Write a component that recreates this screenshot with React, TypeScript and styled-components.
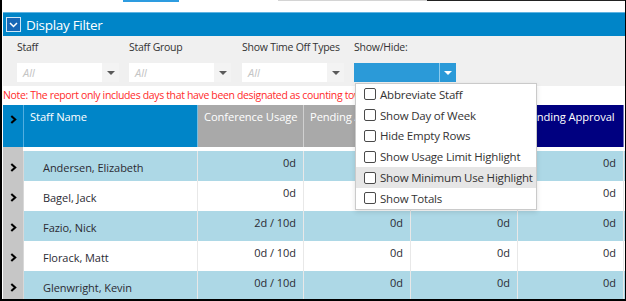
import styled, { createGlobalStyle } from 'styled-components';

const GlobalStyle = createGlobalStyle`
    body {
        margin: 0;
        background: #fff;
        font-family: "Open Sans", "Noto Sans", sans-serif;
    }
`

const Frame = styled.div`
    position: relative;
    width: 626px;
    height: 301px;
    box-sizing: border-box;
    border-left: 2px solid #000;
    border-right: 1px solid #000;
    border-bottom: 2px solid #000;
    padding-left: 1px;
    overflow: hidden;
    display: flex;
    flex-direction: column;
`

const TopStrip = styled.div`
    height: 12px;
    flex: none;
    display: flex;
    align-items: flex-start;
`

const TabMark = styled.div`
    margin-left: 120px;
    width: 56px;
    height: 2px;
    background: #2d9ce0;
`

const EdgeLine = styled.div<{ $dark?: boolean; $w?: number }>`
    margin-left: ${p => (p.$dark ? 0 : 99)}px;
    ${p => (p.$w ? `width: ${p.$w}px;` : 'flex: 1;')}
    height: 1px;
    background: ${p => (p.$dark ? '#222' : '#d4d4d4')};
`

const FilterHeader = styled.div`
    height: 24px;
    flex: none;
    box-sizing: border-box;
    background: #0085c8;
    border-top: 1px solid #5fb4e2;
    display: flex;
    align-items: center;
    gap: 5px;
    padding-left: 3px;
    color: #fff;
    font-size: 13.5px;
    letter-spacing: -0.3px;
`

const ToggleBox = styled.div`
    width: 15px;
    height: 15px;
    box-sizing: border-box;
    border: 1px solid #cfe6f6;
    background: #1767b6;
    display: flex;
    align-items: center;
    justify-content: center;
`

const FilterPanel = styled.div`
    height: 50px;
    flex: none;
    box-sizing: border-box;
    background: #f0f0f0;
    padding: 4px 0 0 14px;
    display: flex;
`

const FilterField = styled.div<{ $w: number }>`
    width: ${p => p.$w}px;
    display: flex;
    flex-direction: column;
    gap: 9px;
`

const FilterLabel = styled.div`
    font-size: 10.5px;
    letter-spacing: -0.25px;
    line-height: 14px;
    color: #333;
    white-space: nowrap;
`

const Combo = styled.div`
    display: flex;
    height: 19px;
    width: 102px;
`

const ComboInput = styled.div<{ $active?: boolean }>`
    width: 85px;
    box-sizing: border-box;
    padding-left: 6px;
    background: ${p => (p.$active ? '#2b9ad8' : '#fff')};
    color: #c4c4c4;
    font-style: italic;
    font-size: 11px;
    line-height: 19px;
`

const ComboArrow = styled.div<{ $active?: boolean }>`
    width: 17px;
    box-sizing: border-box;
    display: flex;
    align-items: center;
    justify-content: center;
    background: ${p => (p.$active ? '#2b9ad8' : '#f3f3f3')};
    border-left: 1px solid ${p => (p.$active ? '#8ccbee' : '#f3f3f3')};
    &::after {
        content: '';
        border-left: 4px solid transparent;
        border-right: 4px solid transparent;
        border-top: 4px solid ${p => (p.$active ? '#fff' : '#5a5a5a')};
    }
`

const Note = styled.div`
    height: 19px;
    flex: none;
    line-height: 19px;
    font-size: 10.5px;
    letter-spacing: -0.35px;
    color: #ff2b2b;
    white-space: nowrap;
    overflow: hidden;
`

const COLS = '21px 174px 106px 107px 107px 106px';

const HeaderRow = styled.div`
    display: grid;
    grid-template-columns: ${COLS};
    height: 42px;
    flex: none;
`

const toneColors = {
    blue: '#0085c8',
    grey: '#a9a9a9',
    navy: '#000080',
};

const HeadCell = styled.div<{ $tone: keyof typeof toneColors }>`
    background: ${p => toneColors[p.$tone]};
    color: #fff;
    font-size: 11.2px;
    letter-spacing: -0.1px;
    line-height: 16px;
    padding: 4px 6px 0;
    border-right: 1px solid rgba(255, 255, 255, 0.45);
    white-space: nowrap;
    overflow: hidden;
`

const GutterCell = styled.div<{ $head?: boolean }>`
    background: ${p => (p.$head ? '#0085c8' : '#c6c6c6')};
    border-right: 1px solid ${p => (p.$head ? '#52aee0' : '#d8d8d8')};
    display: flex;
    justify-content: center;
    align-items: ${p => (p.$head ? 'flex-start' : 'center')};
    padding-top: ${p => (p.$head ? 10 : 3)}px;
    box-sizing: border-box;
`

const Body = styled.div`
    padding-top: 4px;
    background: linear-gradient(90deg, #c6c6c6 20px, #fff 20px);
`

const DataRow = styled.div<{ $alt?: boolean }>`
    display: grid;
    grid-template-columns: ${COLS};
    height: 30px;
    background: ${p => (p.$alt ? '#add8e6' : '#fff')};
    color: #2b2b33;
    font-size: 11px;
    letter-spacing: -0.05px;
`

const NameCell = styled.div`
    display: flex;
    align-items: center;
    padding: 3px 0 0 19px;
    border-right: 1px solid #e8e8e8;
    white-space: nowrap;
`

const ValueCell = styled.div`
    text-align: right;
    padding: 4px 7px 0 0;
    line-height: 16px;
    border-right: 1px solid #e8e8e8;
    white-space: nowrap;
`

const Menu = styled.div`
    position: absolute;
    left: 353px;
    top: 83px;
    width: 182px;
    box-sizing: border-box;
    background: #fff;
    border: 1px solid #cacaca;
    box-shadow: 0 2px 5px rgba(0, 0, 0, 0.12);
`

const MenuItem = styled.div<{ $hover?: boolean }>`
    height: 20.8px;
    display: flex;
    align-items: center;
    gap: 4px;
    padding-left: 8px;
    background: ${p => (p.$hover ? '#e6e6e6' : 'transparent')};
    font-size: 11.5px;
    letter-spacing: -0.2px;
    color: #333;
    white-space: nowrap;
`

const CheckBox = styled.span`
    width: 12px;
    height: 12px;
    box-sizing: border-box;
    border: 1px solid #4a4a4a;
    border-radius: 2px;
    background: #fff;
    flex: none;
`

const Chevron = () => (
    <svg width="7" height="9" viewBox="0 0 7 9">
        <path d="M1.3 1 L5.2 4.5 L1.3 8" fill="none" stroke="#000" strokeWidth="2.1" />
    </svg>
)

const filters = [
    { label: 'Staff', w: 112 },
    { label: 'Staff Group', w: 113 },
    { label: 'Show Time Off Types', w: 112 },
];

const rows = [
    { name: 'Andersen, Elizabeth', values: ['0d', '0d', '0d', '0d'] },
    { name: 'Bagel, Jack', values: ['0d', '0d', '0d', '0d'] },
    { name: 'Fazio, Nick', values: ['2d / 10d', '0d', '0d', '0d'] },
    { name: 'Florack, Matt', values: ['0d / 10d', '0d', '0d', '0d'] },
    { name: 'Glenwright, Kevin', values: ['0d / 10d', '0d', '0d', '0d'] },
];

const menuItems = [
    'Abbreviate Staff',
    'Show Day of Week',
    'Hide Empty Rows',
    'Show Usage Limit Highlight',
    'Show Minimum Use Highlight',
    'Show Totals',
];

const App = () => {
    return (
        <>
            <GlobalStyle />
            <Frame>
                <TopStrip>
                    <TabMark />
                    <EdgeLine $w={149} />
                    <EdgeLine $dark />
                </TopStrip>
                <FilterHeader>
                    <ToggleBox>
                        <svg width="9" height="6" viewBox="0 0 9 6">
                            <path d="M1 1 L4.5 4.5 L8 1" fill="none" stroke="#fff" strokeWidth="1.5" />
                        </svg>
                    </ToggleBox>
                    Display Filter
                </FilterHeader>
                <FilterPanel>
                    {filters.map((f) => (
                        <FilterField key={f.label} $w={f.w}>
                            <FilterLabel>{f.label}</FilterLabel>
                            <Combo>
                                <ComboInput>All</ComboInput>
                                <ComboArrow />
                            </Combo>
                        </FilterField>
                    ))}
                    <FilterField $w={120}>
                        <FilterLabel>Show/Hide:</FilterLabel>
                        <Combo>
                            <ComboInput $active />
                            <ComboArrow $active />
                        </Combo>
                    </FilterField>
                </FilterPanel>
                <Note>Note: The report only includes days that have been designated as counting towards usage limits.</Note>
                <HeaderRow>
                    <GutterCell $head><Chevron /></GutterCell>
                    <HeadCell $tone="blue">Staff Name</HeadCell>
                    <HeadCell $tone="grey">Conference Usage</HeadCell>
                    <HeadCell $tone="grey">Pending Approval</HeadCell>
                    <HeadCell $tone="grey">Personal Usage</HeadCell>
                    <HeadCell $tone="navy">Pending Approval</HeadCell>
                </HeaderRow>
                <Body>
                    {rows.map((r, i) => (
                        <DataRow key={r.name} $alt={i % 2 === 0}>
                            <GutterCell><Chevron /></GutterCell>
                            <NameCell>{r.name}</NameCell>
                            {r.values.map((v, j) => (
                                <ValueCell key={j}>{v}</ValueCell>
                            ))}
                        </DataRow>
                    ))}
                </Body>
                <Menu>
                    {menuItems.map((item) => (
                        <MenuItem key={item} $hover={item === 'Show Minimum Use Highlight'}>
                            <CheckBox />
                            {item}
                        </MenuItem>
                    ))}
                </Menu>
            </Frame>
        </>
    )
}

export default App;
